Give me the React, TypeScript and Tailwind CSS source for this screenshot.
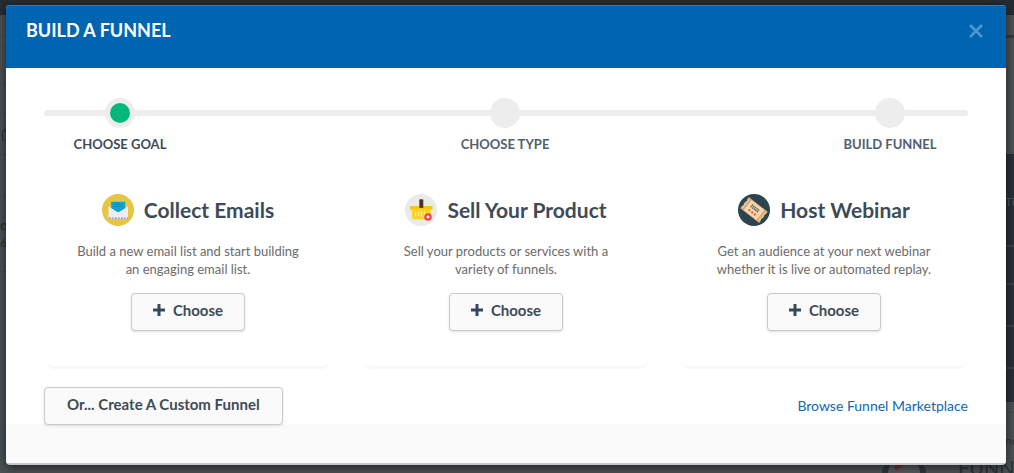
import React from "react";

function EmailIcon() {
  return (
    <svg viewBox="0 0 32 32" className="size-8 shrink-0" aria-hidden="true">
      <circle cx="16" cy="16" r="16" fill="#e7c441" />
      <path d="M6.500 13 16.200 5.500 26 13V24.500H6.500Z" fill="#c4c9a8" />
      <path d="M9.200 7.800H23.200V18H9.200Z" fill="#0aa6cf" />
      <path d="M12 10h8.500M12 12.400h8.500" stroke="#078fb5" strokeWidth=".8" />
      <path d="M6.500 12.500 16.200 18.500 26 12.500V24.800H6.500Z" fill="#ebeeec" />
      <path d="M7 24.200h19" stroke="#e2574c" strokeWidth="1.200" strokeDasharray="1.600 4.400" />
      <path d="M10 24.200h16" stroke="#3db3c0" strokeWidth="1.200" strokeDasharray="1.600 4.400" />
    </svg>
  );
}

function BasketIcon() {
  return (
    <svg viewBox="0 0 32 32" className="size-8 shrink-0" aria-hidden="true">
      <circle cx="16" cy="16" r="16" fill="#e8ebea" />
      <path d="M5 12h22.500v3.500H5Z" fill="#fbc412" />
      <path d="M6.500 15h19.500L25 25.200H7.500Z" fill="#fdd21c" />
      <path d="M10.500 17.500v5M13.500 17.500v5M16.500 17.500v5M19.500 17.500v5" stroke="#fff0a3" strokeWidth="1.300" />
      <rect x="14.300" y="5.200" width="4" height="8.800" rx=".8" fill="#54302c" />
      <circle cx="23" cy="23" r="3.800" fill="#f0444e" />
      <path d="M23 21.600v2.800M21.600 23h2.800" stroke="#fff" strokeWidth="1.400" />
    </svg>
  );
}

function TicketIcon() {
  return (
    <svg viewBox="0 0 32 32" className="size-8 shrink-0" aria-hidden="true">
      <circle cx="16" cy="16" r="16" fill="#2b4450" />
      <g transform="rotate(38 16 16)">
        <path d="M4 9h24v3l-1 1.300 1 1.300v2.800l-1 1.300 1 1.300v3H4v-3l1-1.300-1-1.300v-2.800l1-1.300-1-1.300Z" fill="#d5aa82" />
        <path d="M8 9.800h16v12.400H8Z" fill="#f6d9ab" />
        <path d="M5.500 10.500v11M26.500 10.500v11" stroke="#efcfa2" strokeWidth="1" />
        <path d="M11 13.200h10M11 15.200h10" stroke="#59605a" strokeWidth="1.600" strokeDasharray="1.300 .7" />
        <path d="M11.500 19h9" stroke="#e2574c" strokeWidth="2" strokeDasharray="2 1.500" />
      </g>
    </svg>
  );
}

const steps = [
  { label: "CHOOSE GOAL", active: true },
  { label: "CHOOSE TYPE", active: false },
  { label: "BUILD FUNNEL", active: false },
];

const goals = [
  {
    title: "Collect Emails",
    lines: ["Build a new email list and start building", "an engaging email list."],
    Icon: EmailIcon,
  },
  {
    title: "Sell Your Product",
    lines: ["Sell your products or services with a", "variety of funnels."],
    Icon: BasketIcon,
  },
  {
    title: "Host Webinar",
    lines: ["Get an audience at your next webinar", "whether it is live or automated replay."],
    Icon: TicketIcon,
  },
];

const buttonClass =
  "flex h-[38px] items-center justify-center rounded border border-[#c8cacb] bg-[#fafafa] pb-1 text-[15px] font-bold text-[#3e4b56] shadow-sm";

function PageBehind() {
  return (
    <div className="absolute inset-0 flex flex-col overflow-hidden bg-[#4b5053] text-[#2b3137]" aria-hidden="true">
      <div className="h-[15px] shrink-0 bg-[#262c33]" />
      <div className="flex grow justify-between">
        <div className="flex w-5 flex-col">
          <div className="h-[21px] border-b border-[#43484b]" />
          <div className="h-[11px] border-b border-[#43484b]" />
          <div className="h-[37px] border-b border-[#43484b]" />
          <div className="h-[30px] border-b border-[#43484b]" />
          <div className="flex h-[41px] items-center border-b border-[#43484b] pl-0.5">
            <svg viewBox="0 0 14 14" className="size-3.5">
              <path d="M.5 4h12v9H.5ZM3 4V1h5v3" fill="none" stroke="#30363b" />
            </svg>
          </div>
          <div className="h-[42px] border-b border-[#43484b]" />
          <div className="h-[75px] border-b border-[#43484b] pt-5">
            <p className="text-sm leading-4 font-bold">o</p>
            <p className="text-xs leading-5">6</p>
          </div>
        </div>
        <div className="flex w-[9px] flex-col">
          <div className="h-5" />
          <div className="h-[3px] bg-[#33393e]" />
          <div className="h-[116px]" />
          <div className="h-[91px] bg-[#2a3037] pt-10 text-xs text-[#50565a]">TI</div>
          <div className="h-[157px] divide-y-2 divide-[#3a4045] bg-[#2a3037]">
            <div className="h-10 border-t-2 border-[#3a4045]" />
            <div className="h-[42px]" />
            <div className="h-[42px]" />
            <div className="h-8" />
          </div>
          <div className="h-[11px] border-b border-[#43484b]" />
          <p className="pt-5 text-xs">no</p>
        </div>
      </div>
      <div className="absolute right-0 bottom-0 flex h-5 items-start gap-8 overflow-hidden">
        <svg viewBox="0 0 44 44" className="size-11">
          <circle cx="22" cy="22" r="22" fill="#30343d" />
          <circle cx="22" cy="20" r="16" fill="#55595c" />
          <path d="m12 14 14-14-4 9 10-5-18 14Z" fill="#7c2a32" />
        </svg>
        <p className="w-14 text-xl leading-7">FUNNEL</p>
      </div>
    </div>
  );
}

export default function App() {
  return (
    <div className="relative min-h-screen pt-[5px] pr-2 pb-2 pl-1.5 font-['Lato',sans-serif] text-[#3e4b56]">
      <PageBehind />
      <section
        role="dialog"
        aria-labelledby="dialog-title"
        className="relative overflow-hidden rounded border-b-2 border-[#c4c6c7] bg-white shadow-[0_2px_10px_rgba(0,0,0,0.6)]"
      >
        <header className="flex h-[63px] items-start justify-between border-t border-[#2b7bba] bg-[#0065b1] px-5 pt-3">
          <h1 id="dialog-title" className="text-lg leading-6 font-bold text-white">
            BUILD A FUNNEL
          </h1>
          <button type="button" aria-label="Close" className="flex h-[26px] w-5 items-center justify-center">
            <svg viewBox="0 0 14 14" className="size-3.5">
              <path d="m1 1 12 12M13 1 1 13" stroke="#4d95cc" strokeWidth="2.800" />
            </svg>
          </button>
        </header>

        <div className="px-[38px] pt-[30px]">
          <div className="relative">
            <div className="absolute inset-x-0 top-3 h-1.5 rounded-full bg-[#ededed]" />
            <ol className="relative flex justify-between pr-0.5">
              {steps.map((step) => (
                <li
                  key={step.label}
                  aria-current={step.active ? "step" : undefined}
                  className="flex w-[152px] flex-col items-center gap-2"
                >
                  <span className="flex size-[30px] items-center justify-center rounded-full bg-[#ededed]">
                    {step.active && <span className="size-5 rounded-full bg-[#04b87c]" />}
                  </span>
                  <span
                    className={
                      step.active
                        ? "text-[13px] leading-4 font-bold text-[#3e4b56]"
                        : "text-[13px] leading-4 font-bold text-[#50606c]"
                    }
                  >
                    {step.label}
                  </span>
                </li>
              ))}
            </ol>
          </div>

          <div className="mx-0.5 mt-10 grid grid-cols-3 gap-[34px]">
            {goals.map(({ title, lines, Icon }) => (
              <article
                key={title}
                className="flex flex-col items-center rounded-b-lg border-b-3 border-[#f8f8f8] pb-[35px]"
              >
                <h2 className="flex items-center gap-2.5 text-[21px] leading-9 font-bold">
                  <Icon />
                  {title}
                </h2>
                <p className="mt-3.5 text-center text-[13px] leading-[18px] text-[#6b6b6b]">
                  {lines[0]}
                  <br />
                  {lines[1]}
                </p>
                <button type="button" className={`${buttonClass} mt-[15px] w-[114px] gap-2`}>
                  <svg viewBox="0 0 12 12" className="size-3" aria-hidden="true">
                    <path d="M6 0v12M0 6h12" stroke="#34495e" strokeWidth="3" />
                  </svg>
                  Choose
                </button>
              </article>
            ))}
          </div>

          <div className="relative mt-[18px] flex items-center justify-between">
            <button type="button" className={`${buttonClass} px-[22px]`}>
              Or... Create A Custom Funnel
            </button>
            <a href="#marketplace" className="text-sm text-[#1068b0]">
              Browse Funnel Marketplace
            </a>
          </div>
        </div>
        <footer className="-mt-px h-[39px] bg-[#fafafa]" />
      </section>
    </div>
  );
}
